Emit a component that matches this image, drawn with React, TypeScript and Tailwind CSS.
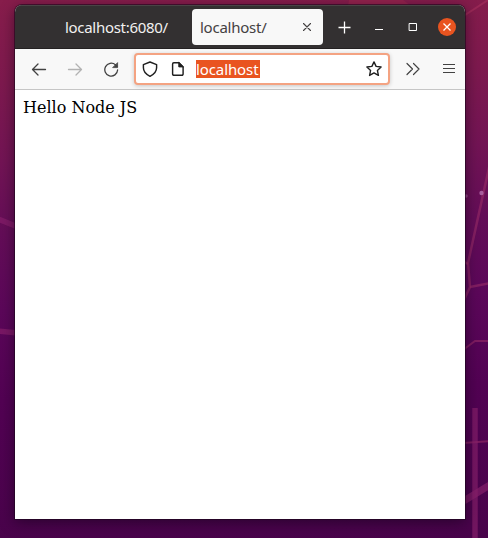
import type { ReactNode } from "react";

function Icon({ size = 16, children, className = "" }: { size?: number; children: ReactNode; className?: string }) {
  return (
    <svg
      width={size}
      height={size}
      viewBox={`0 0 ${size} ${size}`}
      fill="none"
      stroke="currentColor"
      strokeWidth="1.3"
      strokeLinecap="round"
      strokeLinejoin="round"
      className={`shrink-0 ${className}`}
    >
      {children}
    </svg>
  );
}

function Wallpaper() {
  return (
    <svg className="absolute inset-0" width="488" height="538" viewBox="0 0 488 538" fill="none">
      <path d="M349 0h54l8 6h-63z" fill="#a52a50" fillOpacity=".45" />
      <path d="M488 0L462 17" stroke="#ad345f" strokeOpacity=".5" strokeWidth="2" />
      <g stroke="#9b2c68" strokeOpacity=".58" strokeWidth="2.5">
        <path d="M490 163L468 263L470 287L463 302" />
        <path d="M463 261l5 3M470 287l20-4" />
        <path d="M463 350l12-9h15M463 443l27-2" strokeWidth="2" />
      </g>
      <g stroke="#88206b" strokeOpacity=".65">
        <path d="M475 408v130" strokeWidth="5.5" />
        <path d="M462 502l28-17" strokeWidth="7" />
        <path d="M-2 219l20 8M-2 331l20 2" strokeWidth="5.5" />
      </g>
      <circle cx="481.5" cy="193" r="2.2" fill="#b26aa8" fillOpacity=".85" />
      <circle cx="466" cy="196" r="1.8" fill="#a85a99" fillOpacity=".65" />
    </svg>
  );
}

function TitleBar() {
  return (
    <header className="flex h-11 items-center border-t border-b border-t-[#484545] border-b-[#242122] bg-[#333031] text-white">
      <div className="w-[177px] pl-[50px] text-[15px] leading-5 tracking-[-0.3px] text-[#f2f1f0]">localhost:6080/</div>
      <div className="flex h-9 w-[131px] items-center justify-between rounded-[4px] bg-[#f8f8f8] pr-[11px] pl-2 text-[#444142]">
        <span className="text-[15px] leading-5 tracking-[-0.25px]">localhost/</span>
        <Icon size={10}>
          <path d="M1.5 1.5l7 7M8.5 1.5l-7 7" strokeWidth="1.1" />
        </Icon>
      </div>
      <Icon size={14} className="ml-[14px]">
        <path d="M1.5 7.5h12M7.5 1.5v12" strokeLinecap="butt" />
      </Icon>
      <Icon size={10} className="ml-[23px]">
        <path d="M1 7.5h8" strokeWidth="1" strokeLinecap="butt" />
      </Icon>
      <Icon size={10} className="ml-6">
        <path d="M1.5 1.5h7v7h-7z" strokeWidth="1" strokeLinejoin="miter" />
      </Icon>
      <div className="ml-5 flex size-[18px] items-center justify-center rounded-full bg-[#e95420]">
        <Icon size={10}>
          <path d="M1.5 1.5l7 7M8.5 1.5l-7 7" strokeLinecap="butt" />
        </Icon>
      </div>
    </header>
  );
}

function Toolbar() {
  return (
    <nav className="flex h-[41px] items-center border-b border-[#c6c6c6] bg-[#f8f8f8] text-[#424242]">
      <Icon className="ml-4">
        <path d="M14.5 8.5H1.5M7 3L1.5 8.5L7 14" />
      </Icon>
      <Icon className="ml-5 text-[#b2b2b2]">
        <path d="M1.5 8.5h13M9 3l5.5 5.5L9 14" />
      </Icon>
      <Icon className="ml-5">
        <path d="M14.6 9A6.4 6.4 0 1 1 12.4 3.8L14 5.4" />
        <path d="M14.6 2v4.6H10z" fill="currentColor" strokeWidth=".8" />
      </Icon>
      <div className="ml-[15px] flex h-8 w-[256px] items-center rounded-[4px] border-2 border-[#f4a382] bg-white text-[#202020] shadow-[0_1px_4px_rgba(0,0,0,0.2)]">
        <Icon className="ml-[6px]">
          <path d="M8 1l6.6 2.6v3.2c0 3.5-2.7 6.6-6.6 8.5C4.1 13.4 1.4 10.3 1.4 6.8V3.6z" strokeWidth="1.45" />
        </Icon>
        <Icon className="ml-3">
          <path d="M3.8 1.7h5.1l4.2 4.2v7.2a1.2 1.2 0 0 1-1.2 1.2H3.8a1.2 1.2 0 0 1-1.2-1.2V2.9a1.2 1.2 0 0 1 1.2-1.2z" strokeWidth="1.45" />
          <path d="M8.8 1.7v4.2h4.3z" fill="currentColor" strokeWidth="1" />
        </Icon>
        <div className="ml-[10px] h-[18px] w-16 overflow-hidden bg-[#e95420] text-[15px] leading-[18px] tracking-[-0.1px] whitespace-nowrap text-white">
          localhost
        </div>
        <Icon className="ml-auto mr-[6px]">
          <path d="M8 .9l2.1 4.5 5 .6-3.7 3.4 1 5L8 11.9l-4.4 2.5 1-5L.9 6l5-.6z" strokeWidth="1.4" />
        </Icon>
      </div>
      <Icon className="ml-[15px]">
        <path d="M2 2.5L7.5 8L2 13.5M8.5 2.5L14 8l-5.5 5.5" strokeWidth="1.2" />
      </Icon>
      <Icon className="ml-5">
        <path d="M2 3.5h12M2 7.5h12M2 11.5h12" strokeWidth="1.1" strokeLinecap="butt" />
      </Icon>
    </nav>
  );
}

export default function App() {
  return (
    <div className="relative h-[538px] w-[488px] overflow-hidden bg-[linear-gradient(178deg,#871d4b_0%,#7d194e_15%,#721454_29%,#630d57_42%,#5b0759_56%,#520253_72%,#48034a_100%)] px-[15px] pt-[5px] font-['Noto_Sans',sans-serif]">
      <Wallpaper />
      <main className="relative flex h-[514px] w-[450px] flex-col overflow-hidden rounded-t-[7px] bg-white shadow-[0_0_0_1px_rgba(24,5,25,0.55),0_3px_14px_rgba(10,0,15,0.5)]">
        <TitleBar />
        <Toolbar />
        <section className="flex-1 px-2 pt-2 font-['DejaVu_Serif',serif] text-[16px] leading-[19px] text-black">Hello Node JS</section>
      </main>
    </div>
  );
}
